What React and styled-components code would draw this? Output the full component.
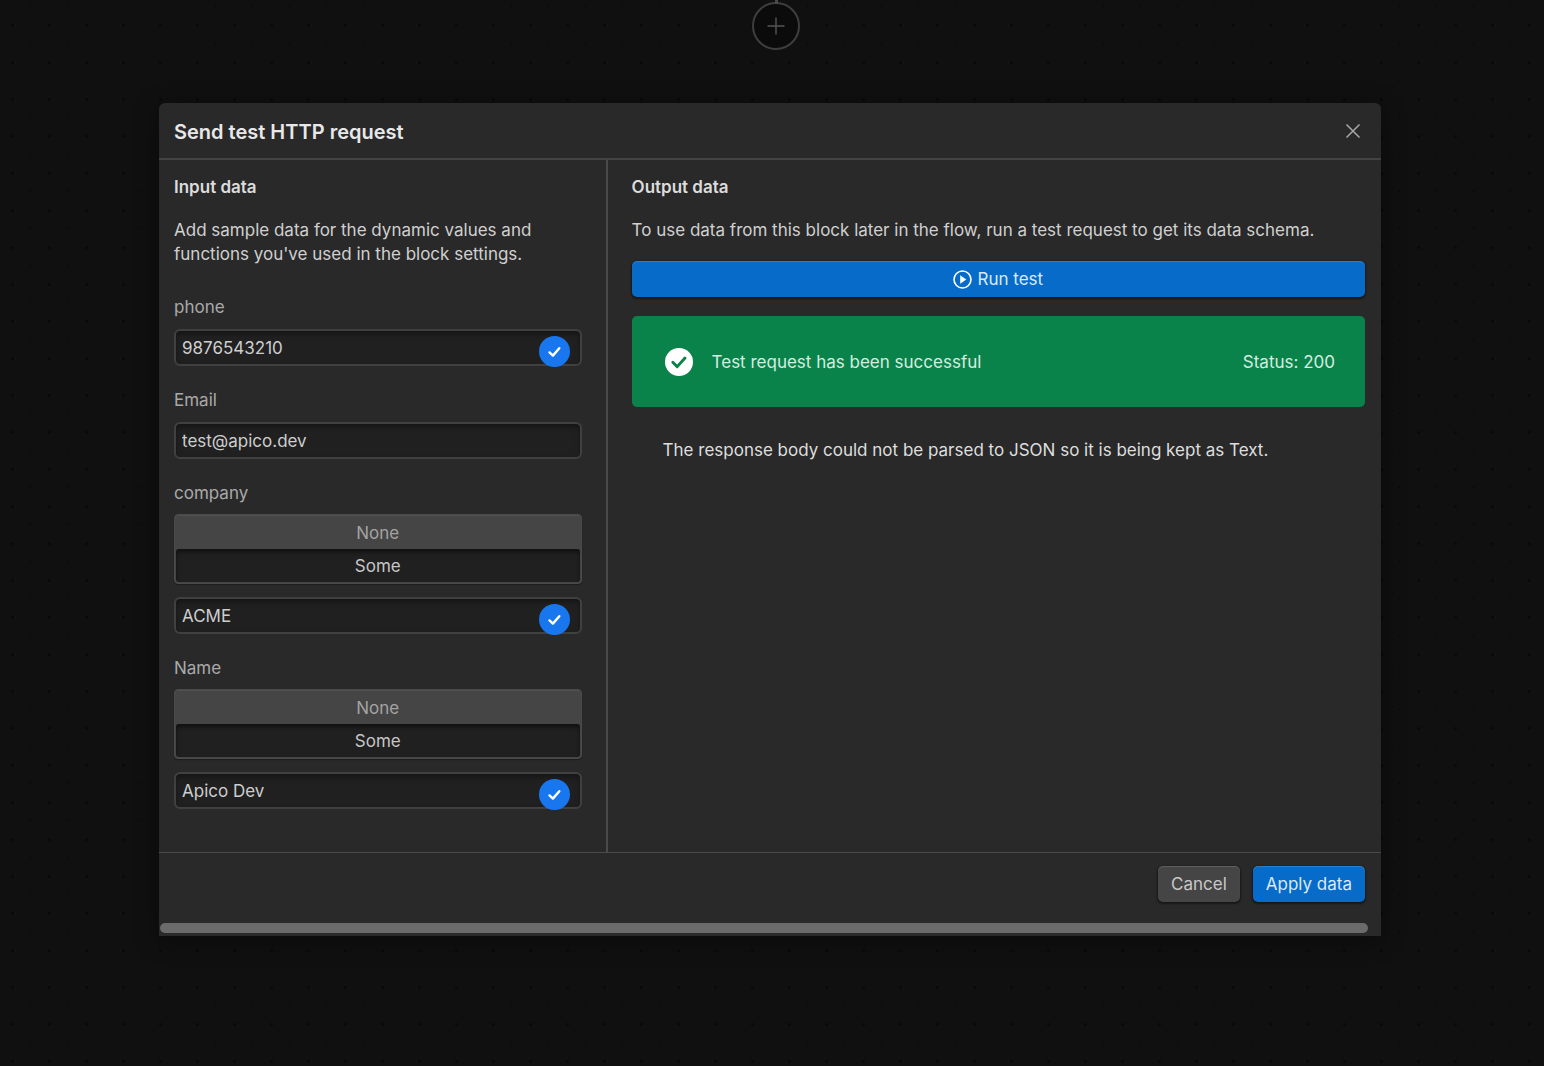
import { useState } from "react";
import styled, { createGlobalStyle } from "styled-components";

const GlobalStyle = createGlobalStyle`
  *, *::before, *::after {
    box-sizing: border-box;
  }

  body {
    margin: 0;
    background-color: #101010;
    color: #d0d0d0;
    font-family: Inter, "Liberation Sans", sans-serif;
    font-size: 17px;
    line-height: 24px;
  }

  button, input {
    font: inherit;
  }
`;

const Canvas = styled.div`
  position: relative;
  min-height: 100vh;
  padding: 103px 163px 130px 159px;
  background-color: #101010;
  background-image: radial-gradient(circle, #090909 1px, transparent 2px),
    radial-gradient(circle, #0b0b0b 1px, transparent 1px);
  background-size: 37px 37px;
  background-position: -6px 7px, 12px -12px;
`;

const AddNode = styled.button`
  position: absolute;
  top: 2px;
  left: calc(50% - 20px);
  display: flex;
  justify-content: center;
  align-items: center;
  width: 48px;
  height: 48px;
  padding: 0;
  border: 2px solid #3e3e3e;
  border-radius: 50%;
  background-color: #0b0b0b;
  color: #555555;

  &::before {
    content: "";
    position: absolute;
    bottom: 100%;
    width: 3px;
    height: 4px;
    background-color: #4a4a4a;
  }
`;

const Modal = styled.section`
  border-radius: 6px 6px 0 0;
  background-color: #292929;
  box-shadow: 0 4px 24px rgb(0 0 0 / 0.4);
`;

const ModalHeader = styled.header`
  display: flex;
  justify-content: space-between;
  align-items: center;
  height: 57px;
  padding: 0 18px 0 15px;
  border-bottom: 2px solid #434343;
`;

const Title = styled.h1`
  margin: 2px 0 0;
  color: #e8e8e8;
  font-size: 20px;
  font-weight: 600;
`;

const CloseButton = styled.button`
  display: flex;
  padding: 0;
  border: 0;
  background: none;
  color: #a8a8a8;
`;

const ModalBody = styled.div`
  display: grid;
  grid-template-columns: minmax(0, 58fr) minmax(0, 100fr);
`;

const InputPanel = styled.div`
  padding: 15px 24px 43px 15px;
  border-right: 2px solid #4a4a4a;
`;

const OutputPanel = styled.div`
  padding: 15px 16px 43px 24px;
`;

const PanelTitle = styled.h2`
  margin: 0 0 19px;
  color: #dcdcdc;
  font-size: 17px;
  font-weight: 600;
  line-height: 24px;
`;

const Text = styled.p`
  margin: 0 0 19px;
`;

const Fields = styled.div`
  display: flex;
  flex-direction: column;
  gap: 22px;
  margin-top: 29px;
`;

const Field = styled.div`
  display: flex;
  flex-direction: column;
  gap: 10px;
`;

const OptionField = styled.fieldset`
  min-width: 0;
  margin: 0;
  padding: 0;
  border: 0;
`;

const Label = styled.label`
  color: #a9a9a9;
`;

const Legend = styled.legend`
  padding: 0;
  color: #a9a9a9;
`;

const Options = styled.div`
  margin: 9px 0 13px;
  padding: 1px;
  border: 1px solid #4a4a4a;
  border-radius: 4px;
  background-color: #454545;
  box-shadow: inset 0 1px 0 #505050, 0 1px 1px rgb(0 0 0 / 0.3);
`;

const Option = styled.label`
  display: flex;
  justify-content: center;
  align-items: center;
  height: 33px;
  border-radius: 3px;
  color: #a3a3a3;

  &:has(input:checked) {
    background-color: #202020;
    box-shadow: inset 0 3px 4px rgb(0 0 0 / 0.5);
    color: #c6c6c6;
  }
`;

const HiddenRadio = styled.input`
  position: absolute;
  opacity: 0;
  pointer-events: none;
`;

const InputWrap = styled.div`
  position: relative;
  display: flex;
`;

const Input = styled.input`
  width: 100%;
  height: 37px;
  padding: 0 6px;
  border: 2px solid #404040;
  border-radius: 6px;
  outline: 0;
  background-color: #202020;
  box-shadow: inset 0 3px 5px rgb(0 0 0 / 0.35);
  color: #cecece;
`;

const Badge = styled.span`
  position: absolute;
  top: 7px;
  right: 12px;
  display: flex;
  justify-content: center;
  align-items: center;
  width: 31px;
  height: 31px;
  border-radius: 50%;
  background-color: #1877ee;
`;

const Button = styled.button`
  display: flex;
  justify-content: center;
  align-items: center;
  gap: 5px;
  width: ${({ $wide }) => ($wide ? "100%" : "auto")};
  height: 36px;
  padding: 0 13px;
  border: 0;
  border-radius: 5px;
  background-color: ${({ $primary }) => ($primary ? "#066bc9" : "#454545")};
  box-shadow: inset 0 1px 1px rgb(255 255 255 / 0.15),
    0 1px 2px 1px rgb(0 0 0 / 0.45);
  color: ${({ $primary }) => ($primary ? "#dbe9f8" : "#c8c8c8")};
`;

const Result = styled.div`
  display: flex;
  align-items: center;
  gap: 19px;
  height: 91px;
  margin: 19px 0 31px;
  padding: 0 30px 0 33px;
  border-radius: 5px;
  background-color: #09834a;
  color: #d6ece0;
`;

const Status = styled.span`
  margin-left: auto;
`;

const Note = styled.p`
  margin: 0;
  padding: 0 31px;
  color: #dedede;
`;

const ModalFooter = styled.footer`
  padding: 13px 13px 3px 1px;
  border-top: 1px solid #4a4a4a;
`;

const Actions = styled.div`
  display: flex;
  justify-content: flex-end;
  gap: 13px;
  padding-right: 3px;
`;

const ScrollThumb = styled.div`
  height: 10px;
  margin-top: 21px;
  border-radius: 5px;
  background-color: #6b6b6b;
`;

const PlusIcon = () => (
  <svg width="18" height="18" viewBox="0 0 18 18" fill="none" aria-hidden="true">
    <path d="M9 0.5V17.5M0.5 9H17.5" stroke="currentColor" strokeWidth="1.4" />
  </svg>
);

const CloseIcon = () => (
  <svg width="20" height="20" viewBox="0 0 20 20" fill="none" aria-hidden="true">
    <path d="M3.5 3.5L16.5 16.5M16.5 3.5L3.5 16.5" stroke="currentColor" strokeWidth="1.5" />
  </svg>
);

const CheckIcon = () => (
  <svg width="15" height="15" viewBox="0 0 15 15" fill="none" aria-hidden="true">
    <path
      d="M2.5 8.4L5.9 11.6L12.3 4.2"
      stroke="#fff"
      strokeWidth="2.4"
      strokeLinecap="round"
      strokeLinejoin="round"
    />
  </svg>
);

const PlayIcon = () => (
  <svg width="19" height="19" viewBox="0 0 19 19" fill="none" aria-hidden="true">
    <circle cx="9.5" cy="9.5" r="8.5" stroke="#fff" strokeWidth="1.6" />
    <path d="M7.2 5.3L13.3 9.5L7.2 13.7Z" fill="#fff" />
  </svg>
);

const SuccessIcon = () => (
  <svg width="28" height="28" viewBox="0 0 28 28" fill="none" aria-hidden="true">
    <circle cx="14" cy="14" r="14" fill="#fff" />
    <path
      d="M7.8 14.2L12.2 18.6L20 10"
      stroke="#09834a"
      strokeWidth="2.9"
      strokeLinecap="round"
      strokeLinejoin="round"
    />
  </svg>
);

const fields = [
  { name: "phone", value: "9876543210", verified: true },
  { name: "Email", value: "test@apico.dev" },
  { name: "company", value: "ACME", verified: true, optional: true },
  { name: "Name", value: "Apico Dev", verified: true, optional: true },
];

const TextInput = ({ id, value, verified, ...rest }) => {
  const [text, setText] = useState(value);

  return (
    <InputWrap>
      <Input id={id} type="text" value={text} onChange={(e) => setText(e.target.value)} {...rest} />
      {verified && (
        <Badge>
          <CheckIcon />
        </Badge>
      )}
    </InputWrap>
  );
};

const OptionalField = ({ name, value, verified }) => {
  const [selected, setSelected] = useState("Some");

  return (
    <OptionField>
      <Legend>{name}</Legend>
      <Options>
        {["None", "Some"].map((option) => (
          <Option key={option}>
            <HiddenRadio
              type="radio"
              name={name}
              checked={selected === option}
              onChange={() => setSelected(option)}
            />
            {option}
          </Option>
        ))}
      </Options>
      <TextInput value={value} verified={verified} aria-label={name} />
    </OptionField>
  );
};

const App = () => {
  return (
    <>
      <GlobalStyle />
      <Canvas>
        <AddNode type="button" aria-label="Add block">
          <PlusIcon />
        </AddNode>
        <Modal role="dialog" aria-labelledby="modal-title">
          <ModalHeader>
            <Title id="modal-title">Send test HTTP request</Title>
            <CloseButton type="button" aria-label="Close">
              <CloseIcon />
            </CloseButton>
          </ModalHeader>

          <ModalBody>
            <InputPanel>
              <PanelTitle>Input data</PanelTitle>
              <Text>
                Add sample data for the dynamic values and functions you've used in the block
                settings.
              </Text>
              <Fields>
                {fields.map((field) =>
                  field.optional ? (
                    <OptionalField key={field.name} {...field} />
                  ) : (
                    <Field key={field.name}>
                      <Label htmlFor={field.name}>{field.name}</Label>
                      <TextInput id={field.name} value={field.value} verified={field.verified} />
                    </Field>
                  )
                )}
              </Fields>
            </InputPanel>

            <OutputPanel>
              <PanelTitle>Output data</PanelTitle>
              <Text>
                To use data from this block later in the flow, run a test request to get its data
                schema.
              </Text>
              <Button type="button" $primary $wide>
                <PlayIcon />
                Run test
              </Button>
              <Result role="status">
                <SuccessIcon />
                <span>Test request has been successful</span>
                <Status>Status: 200</Status>
              </Result>
              <Note>
                The response body could not be parsed to JSON so it is being kept as Text.
              </Note>
            </OutputPanel>
          </ModalBody>

          <ModalFooter>
            <Actions>
              <Button type="button">Cancel</Button>
              <Button type="button" $primary>
                Apply data
              </Button>
            </Actions>
            <ScrollThumb />
          </ModalFooter>
        </Modal>
      </Canvas>
    </>
  );
};

export default App;
